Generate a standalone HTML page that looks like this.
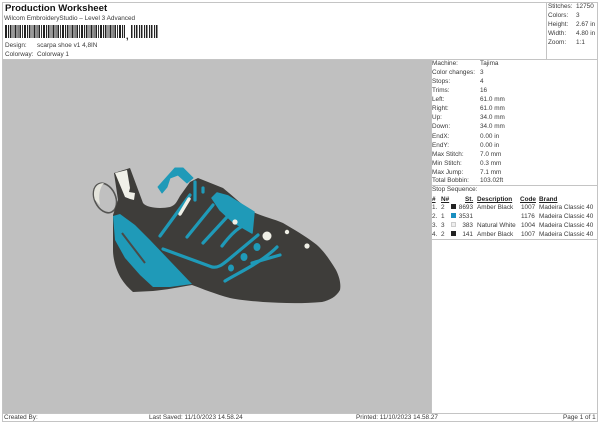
<!DOCTYPE html>
<html><head><meta charset="utf-8"><style>
html,body{margin:0;padding:0;background:#fff}
#p{position:relative;width:600px;height:424px;overflow:hidden;background:#fff;font-family:"Liberation Sans",Arial,sans-serif;font-size:6.4px;line-height:8px;color:#3a3a3a;filter:blur(.3px)}
#p span{position:absolute;white-space:nowrap}
.l{position:absolute;background:#c4c4c4}
.r{text-align:right}
.u{font-weight:bold;text-decoration:underline;color:#222}
.s{position:absolute;width:5px;height:5px}
</style></head><body><div id="p">
<div style="position:absolute;left:3px;top:59px;width:428px;height:354px;background:#c0c0c0"></div>
<div class="l" style="left:2px;top:2px;width:596px;height:1px"></div>
<div class="l" style="left:2px;top:59px;width:596px;height:1px"></div>
<div class="l" style="left:2px;top:413px;width:596px;height:1px"></div>
<div class="l" style="left:2px;top:421px;width:596px;height:1px"></div>
<div class="l" style="left:2px;top:2px;width:1px;height:420px"></div>
<div class="l" style="left:597px;top:2px;width:1px;height:420px"></div>
<div class="l" style="left:546px;top:2px;width:1px;height:57px"></div>
<div class="l" style="left:431px;top:59px;width:1px;height:354px"></div>
<div class="l" style="left:431px;top:185px;width:166px;height:1px"></div>
<div class="l" style="left:431px;top:239px;width:166px;height:1px"></div>

<span style="left:5px;top:3px;font:bold 9.6px/12px 'Liberation Sans',sans-serif;color:#111">Production Worksheet</span>
<span style="left:4px;top:15px">Wilcom EmbroideryStudio – Level 3 Advanced</span>
<div style="position:absolute;left:5px;top:25px;width:120px;height:13px;background:repeating-linear-gradient(90deg,#222 0 2px,#fff 2px 3px,#222 3px 4px,#ddd 4px 5px,#222 5px 6.5px,#fff 6.5px 7.5px,#333 7.5px 8.5px,#fff 8.5px 9.5px)"></div>
<div style="position:absolute;left:131px;top:25px;width:27px;height:13px;background:repeating-linear-gradient(90deg,#222 0 1.5px,#fff 1.5px 3px,#222 3px 4px,#ddd 4px 5px)"></div>
<span style="left:126px;top:31px;font:bold 9px/10px 'Liberation Sans',sans-serif;color:#111">,</span>
<span style="left:5px;top:42px">Design:</span><span style="left:37px;top:42px">scarpa shoe v1 4,8IN</span>
<span style="left:5px;top:51px">Colorway:</span><span style="left:37px;top:51px">Colorway 1</span>

<span style="left:548px;top:3px">Stitches:</span><span style="left:576px;top:3px">12750</span>
<span style="left:548px;top:12px">Colors:</span><span style="left:576px;top:12px">3</span>
<span style="left:548px;top:21px">Height:</span><span style="left:576px;top:21px">2.67 in</span>
<span style="left:548px;top:30px">Width:</span><span style="left:576px;top:30px">4.80 in</span>
<span style="left:548px;top:39px">Zoom:</span><span style="left:576px;top:39px">1:1</span>

<span style="left:432px;top:60px">Machine:</span><span style="left:480px;top:60px">Tajima</span>
<span style="left:432px;top:69px">Color changes:</span><span style="left:480px;top:69px">3</span>
<span style="left:432px;top:78px">Stops:</span><span style="left:480px;top:78px">4</span>
<span style="left:432px;top:87px">Trims:</span><span style="left:480px;top:87px">16</span>
<span style="left:432px;top:96px">Left:</span><span style="left:480px;top:96px">61.0 mm</span>
<span style="left:432px;top:105px">Right:</span><span style="left:480px;top:105px">61.0 mm</span>
<span style="left:432px;top:114px">Up:</span><span style="left:480px;top:114px">34.0 mm</span>
<span style="left:432px;top:123px">Down:</span><span style="left:480px;top:123px">34.0 mm</span>
<span style="left:432px;top:133px">EndX:</span><span style="left:480px;top:133px">0.00 in</span>
<span style="left:432px;top:142px">EndY:</span><span style="left:480px;top:142px">0.00 in</span>
<span style="left:432px;top:151px">Max Stitch:</span><span style="left:480px;top:151px">7.0 mm</span>
<span style="left:432px;top:160px">Min Stitch:</span><span style="left:480px;top:160px">0.3 mm</span>
<span style="left:432px;top:169px">Max Jump:</span><span style="left:480px;top:169px">7.1 mm</span>
<span style="left:432px;top:177px">Total Bobbin:</span><span style="left:480px;top:177px">103.02ft</span>
<span style="left:432px;top:186px">Stop Sequence:</span>

<span class="u" style="left:432px;top:196px">#</span><span class="u" style="left:441px;top:196px">N#</span>
<span class="u" style="left:465px;top:196px">St.</span><span class="u" style="left:477px;top:196px">Description</span>
<span class="u" style="left:520px;top:196px">Code</span><span class="u" style="left:539px;top:196px">Brand</span>

<span style="left:432px;top:204px">1.</span><span style="left:441px;top:204px">2</span><div class="s" style="left:451px;top:204px;background:#222"></div><span class="r" style="left:457px;top:204px;width:16px">8693</span><span style="left:477px;top:204px">Amber Black</span><span style="left:521px;top:204px">1007</span><span style="left:539px;top:204px">Madeira Classic 40</span>
<span style="left:432px;top:213px">2.</span><span style="left:441px;top:213px">1</span><div class="s" style="left:451px;top:213px;background:#1a8fc0"></div><span class="r" style="left:457px;top:213px;width:16px">3531</span><span style="left:521px;top:213px">1176</span><span style="left:539px;top:213px">Madeira Classic 40</span>
<span style="left:432px;top:222px">3.</span><span style="left:441px;top:222px">3</span><div class="s" style="left:451px;top:222px;background:#eee;outline:1px solid #ccc;outline-offset:-1px"></div><span class="r" style="left:457px;top:222px;width:16px">383</span><span style="left:477px;top:222px">Natural White</span><span style="left:521px;top:222px">1004</span><span style="left:539px;top:222px">Madeira Classic 40</span>
<span style="left:432px;top:231px">4.</span><span style="left:441px;top:231px">2</span><div class="s" style="left:451px;top:231px;background:#222"></div><span class="r" style="left:457px;top:231px;width:16px">141</span><span style="left:477px;top:231px">Amber Black</span><span style="left:521px;top:231px">1007</span><span style="left:539px;top:231px">Madeira Classic 40</span>

<span style="left:4px;top:414px">Created By:</span>
<span style="left:149px;top:414px">Last Saved: 11/10/2023 14.58.24</span>
<span style="left:356px;top:414px">Printed: 11/10/2023 14.58.27</span>
<span style="left:563px;top:414px">Page 1 of 1</span>

<svg style="position:absolute;left:0;top:0" width="600" height="424" viewBox="0 0 600 424">
<g fill="none" stroke-linecap="round" stroke-linejoin="round">
<ellipse cx="105" cy="198" rx="10.5" ry="15.5" transform="rotate(-25 105 198)" stroke="#555553" stroke-width="1.6"/>
<path d="M95 200C92 190 96 183 104 183C100 187 98 195 100 205Z" fill="#e4e4dc"/>
</g>
<path fill="#3e3d3a" d="M114 173L130 168L143 203C147 208 160 209 170 207C176 205 177 201 180 196L190 182L198 178L223 188C233 196 243 206 253 212C264 217 274 219 283 223C295 230 305 236 313 242C322 248 330 260 336 270C340 278 341 285 340 290C336 297 330 300 322 302C300 304 280 303 263 302C250 301 240 300 230 298C215 294 203 289 192 285C180 287 165 290 153 291L133 292C125 285 120 278 117 270C114 262 113 255 113 250L113 215L118 200Z"/>
<path fill="#f0f0e8" d="M115 173L127 170L130 188L129 192L135 193L134 200L130 199L125 197Z"/>
<path fill="#1f9ab8" d="M113 216L120 214L135 225L150 240L192 284L170 287L153 287L140 275L125 258L115 240Z"/>
<path fill="none" stroke="#4a4a48" stroke-width="2" d="M122 233L145 263"/>
<path fill="#1f9ab8" stroke="#1f9ab8" stroke-width="1" stroke-linejoin="round" d="M158 187L175 168L183 168L193 178L187 183L178 175L170 178L167 187L162 193Z"/>
<path fill="#1f9ab8" stroke="#1f9ab8" stroke-width="1.5" stroke-linejoin="round" d="M212 198L217 193L228 196L254 212L252 233L233 222L220 210Z"/>
<g fill="none" stroke="#1f9ab8" stroke-width="3.2" stroke-linecap="round" stroke-linejoin="round">
<path d="M160 236L190 195"/>
<path d="M195 182L195 200"/>
<path d="M203 188L203 192"/>
<path d="M187 237L213 205"/>
<path d="M203 243L227 217"/>
<path d="M222 246C228 238 234 231 241 227"/>
<path d="M163 249L212 267C218 268 222 265 228 260L258 235"/>
<path d="M225 281C240 272 262 262 277 247"/>
<path d="M252 263L280 255"/>
</g>
<path fill="none" stroke="#efefe6" stroke-width="3.4" stroke-linecap="round" d="M180 214L189 199"/>
<g fill="#1f9ab8">
<ellipse cx="231" cy="268" rx="3" ry="3.5"/><ellipse cx="244" cy="257" rx="3.5" ry="4"/><ellipse cx="257" cy="247" rx="3.5" ry="4"/>
</g>
<g fill="#efefe6">
<circle cx="235" cy="222" r="2.6"/><circle cx="267" cy="236" r="4.5"/><circle cx="287" cy="232" r="2.2"/><circle cx="307" cy="246" r="2.6"/>
</g>
</svg>
</div></body></html>
